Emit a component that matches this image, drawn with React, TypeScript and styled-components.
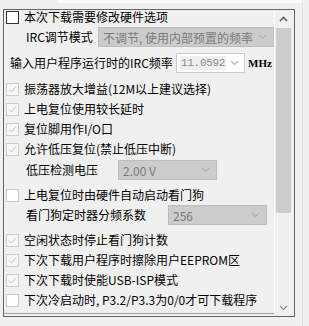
import React from "react";
import styled, { createGlobalStyle } from "styled-components";

const GlobalStyle = createGlobalStyle`
  html, body {
    margin: 0;
    padding: 0;
    background: #f0f0f0;
  }
  body {
    font-family: "Noto Sans CJK SC", "DejaVu Sans", sans-serif;
    font-size: 12px;
    color: #000;
  }
`;

type Opt = { label: string; checked: boolean; enabled?: boolean; top: number };

function Chevron({ up, color }: { up?: boolean; color: string }) {
  return (
    <svg width="9" height="6" viewBox="0 0 9 6">
      <polyline
        points={up ? "1,5 4.5,1.5 8,5" : "1,1 4.5,4.5 8,1"}
        fill="none"
        stroke={color}
        strokeWidth={up ? 1.6 : 1.1}
      />
    </svg>
  );
}

function Check({ checked, enabled }: { checked: boolean; enabled?: boolean }) {
  return (
    <Box $checked={checked} $enabled={!!enabled}>
      {checked && (
        <svg width="11" height="11" viewBox="0 0 11 11">
          <polyline points="2,5.5 4.5,8 9,2.5" fill="none" stroke="#c4c4c4" strokeWidth="1" />
        </svg>
      )}
    </Box>
  );
}

function CheckRow({ label, checked, enabled, top }: Opt) {
  return (
    <Row $top={top}>
      <Check checked={checked} enabled={enabled} />
      <Text>{label}</Text>
    </Row>
  );
}

function App() {
  return (
    <Page>
      <GlobalStyle />
      <TopStrip />
      <Main>
        <Frame>
          <Content>
            <Row $top={0} $h={14}>
              <Check checked={false} enabled />
              <Text>本次下载需要修改硬件选项</Text>
            </Row>
            <Row $top={3}>
              <Label $w={72} $indent={20}>IRC调节模式</Label>
              <Select $w={176}>
                <span>不调节, 使用内部预置的频率</span>
                <Chevron color="#b0b0b0" />
              </Select>
            </Row>
            <Row $top={6}>
              <Label $w={166} $indent={4}>输入用户程序运行时的IRC频率</Label>
              <FreqInput>
                <FreqValue>11.0592</FreqValue>
                <Chevron color="#b0b0b0" />
              </FreqInput>
              <Unit>MHz</Unit>
            </Row>
            <CheckRow top={6} checked label="振荡器放大增益(12M以上建议选择)" />
            <CheckRow top={0} checked label="上电复位使用较长延时" />
            <CheckRow top={0} checked label="复位脚用作I/O口" />
            <CheckRow top={0} checked label="允许低压复位(禁止低压中断)" />
            <Row $top={1}>
              <Label $w={92} $indent={20}>低压检测电压</Label>
              <Select $w={99}>
                <span>2.00 V</span>
                <Chevron color="#b0b0b0" />
              </Select>
            </Row>
            <CheckRow top={5} checked={false} label="上电复位时由硬件自动启动看门狗" />
            <Row $top={0}>
              <Label $w={142} $indent={20}>看门狗定时器分频系数</Label>
              <Select $w={99}>
                <span>256</span>
                <Chevron color="#b0b0b0" />
              </Select>
            </Row>
            <CheckRow top={5} checked label="空闲状态时停止看门狗计数" />
            <CheckRow top={0} checked label="下次下载用户程序时擦除用户EEPROM区" />
            <CheckRow top={0} checked label="下次下载时使能USB-ISP模式" />
            <CheckRow top={0} checked={false} label="下次冷启动时, P3.2/P3.3为0/0才可下载程序" />
          </Content>
          <Separator />
          <ScrollBar>
            <Arrow>
              <Chevron up color="#606060" />
            </Arrow>
            <Thumb />
            <Track />
            <Arrow>
              <Chevron color="#8a8a8a" />
            </Arrow>
          </ScrollBar>
        </Frame>
        <SideLine />
      </Main>
    </Page>
  );
}

const Page = styled.div`
  width: 309px;
  height: 326px;
  overflow: hidden;
  display: flex;
  flex-direction: column;
`;

const TopStrip = styled.div`
  height: 3px;
  margin-left: 57px;
  width: 245px;
  background: #fbfbfb;
`;

const Main = styled.div`
  display: flex;
  flex-direction: row;
  flex: 1;
`;

const Frame = styled.div`
  margin: 6px 0 0 3px;
  width: 290px;
  height: 306px;
  border: 1px solid #646464;
  display: flex;
  flex-direction: row;
`;

const Content = styled.div`
  width: 270px;
  height: 303px;
  border-bottom: 1px solid #a0a0a0;
  display: flex;
  flex-direction: column;
`;

const Separator = styled.div`
  width: 1px;
  height: 303px;
  background: #ffffff;
`;

const ScrollBar = styled.div`
  width: 17px;
  display: flex;
  flex-direction: column;
  align-items: center;
`;

const Arrow = styled.div`
  height: 17px;
  width: 17px;
  display: flex;
  align-items: center;
  justify-content: center;
`;

const Thumb = styled.div`
  margin-top: 1px;
  width: 15px;
  height: 185px;
  background: #cdcdcd;
`;

const Track = styled.div`
  flex: 1;
`;

const SideLine = styled.div`
  margin-left: 7px;
  width: 1px;
  background: #e2e2e2;
`;

const Row = styled.div<{ $top: number; $h?: number }>`
  display: flex;
  flex-direction: row;
  align-items: center;
  height: ${(p) => p.$h ?? 20}px;
  margin-top: ${(p) => p.$top}px;
  padding-left: 2px;
  white-space: nowrap;
`;

const Box = styled.div<{ $checked: boolean; $enabled: boolean }>`
  box-sizing: border-box;
  width: 13px;
  height: 13px;
  flex: none;
  border: 1px solid ${(p) => (p.$enabled ? "#333333" : "#cccccc")};
  background: ${(p) => (p.$checked ? "#f7f7f7" : "#ffffff")};
  display: flex;
  align-items: center;
  justify-content: center;
`;

const Text = styled.span`
  margin-left: 5px;
  line-height: 1;
`;

const Label = styled.span<{ $w: number; $indent: number }>`
  width: ${(p) => p.$w}px;
  margin-left: ${(p) => p.$indent}px;
  flex: none;
  line-height: 1;
`;

const Select = styled.div<{ $w: number }>`
  box-sizing: border-box;
  width: ${(p) => p.$w}px;
  height: 20px;
  background: #cccccc;
  border: 1px solid #bdbdbd;
  color: #7a7a7a;
  display: flex;
  align-items: center;
  justify-content: space-between;
  padding: 0 6px 0 4px;
`;

const FreqInput = styled.div`
  box-sizing: border-box;
  width: 69px;
  height: 20px;
  background: #ffffff;
  border: 1px solid #cccccc;
  display: flex;
  align-items: center;
  justify-content: space-between;
  padding: 0 5px 0 3px;
`;

const FreqValue = styled.span`
  background: #f0f0f0;
  color: #8a8a8a;
  font-family: "Liberation Mono", monospace;
  font-size: 11px;
  letter-spacing: -0.3px;
  padding: 1px 1px;
`;

const Unit = styled.span`
  margin-left: 3px;
  font-family: "Liberation Serif", serif;
  font-weight: bold;
  font-size: 11px;
`;

export default App;
